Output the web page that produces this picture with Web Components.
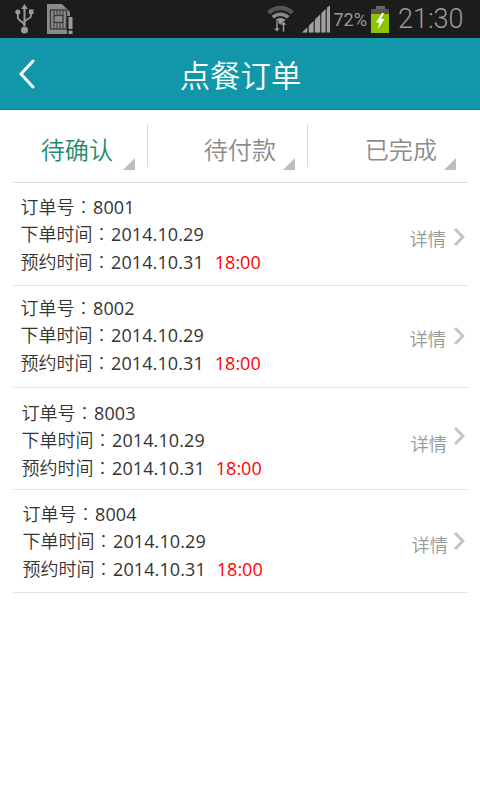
<!DOCTYPE html>
<html><head><meta charset="utf-8">
<style>
html,body{margin:0;padding:0;background:#fff;}
body{width:480px;height:800px;overflow:hidden;font-family:"Open Sans","Noto Sans CJK SC",sans-serif;}
</style></head><body>
<status-bar></status-bar>
<app-header>点餐订单</app-header>
<order-tabs>
  <order-tab active style="--w:135px;--pad:35px;--tr:13px">待确认</order-tab>
  <order-tab style="--w:160px;--pad:32px;--tr:13px">待付款</order-tab>
  <order-tab last style="--w:160px;--pad:31px;--tr:12px">已完成</order-tab>
</order-tabs>
<order-row num="8001" d1="2014.10.29" d2="2014.10.31" t="18:00" style="--x:7.500px;--h:103px;--top:10px;--my:7px;--c:2px;--g:7px"></order-row>
<order-row num="8002" d1="2014.10.29" d2="2014.10.31" t="18:00" style="--x:7.500px;--h:102px;--top:8px;--my:3px;--c:1px;--g:7px"></order-row>
<order-row num="8003" d1="2014.10.29" d2="2014.10.31" t="18:00" style="--x:8.500px;--h:102px;--top:11px;--my:9px;--c:-4px;--g:6px"></order-row>
<order-row num="8004" d1="2014.10.29" d2="2014.10.31" t="18:00" style="--x:9.500px;--h:103px;--top:10px;--my:5px;--c:0px;--g:5px"></order-row>
<script>
function def(name,html){
  customElements.define(name,class extends HTMLElement{
    constructor(){super();this.attachShadow({mode:"open"});}
    connectedCallback(){this.shadowRoot.innerHTML=typeof html==="function"?html(this):html;}
  });
}
def("status-bar",`<style>
:host{display:flex;align-items:center;height:38px;background:#1c1c1c;color:#9a9a9a;font-family:"Roboto",sans-serif;padding:0 16.500px 0 15px;box-sizing:border-box}
svg{display:block;flex:none}
.l{display:flex;align-items:center;gap:13px}
.r{margin-left:auto;display:flex;align-items:center}
.pct{font-size:18px;margin:0 4px 0 0}
.clock{font-size:27px;font-weight:300;margin-left:9px}
</style>
<div class="l">
<svg width="19" height="30" viewBox="0 0 19 30"><path d="M9.500 0l3.300 5h-2.300v17h-2V5H6.200z" fill="#9a9a9a"/><circle cx="9.500" cy="26" r="3.500" fill="#9a9a9a"/><path d="M2.800 9v4.500c0 3 6.700 4.500 6.700 8M16 9v3c0 3-6.500 3-6.500 6.500" fill="none" stroke="#9a9a9a" stroke-width="1.800"/><circle cx="2.800" cy="8" r="2.500" fill="#9a9a9a"/><rect x="14" y="5.500" width="4.500" height="4.500" fill="#9a9a9a"/></svg>
<svg width="26" height="30" viewBox="0 0 26 30"><path d="M0 0h15l8 8v22H0z" fill="#8a8a8a"/><rect x="3.500" y="6" width="16" height="19" fill="none" stroke="#3a3a3a" stroke-width="1.300"/><rect x="7" y="11.500" width="9" height="7" fill="none" stroke="#3a3a3a" stroke-width="1.300"/><path d="M7 6v5M10 6v5M13 6v5M16 6v5M7 19v6M10 19v6M13 19v6M16 19v6" stroke="#3a3a3a"/><rect x="20" y="12" width="6" height="18" fill="#1c1c1c"/><rect x="21.500" y="13" width="4" height="12" fill="#9a9a9a"/><rect x="21.500" y="26.500" width="4" height="3.500" fill="#9a9a9a"/></svg>
</div>
<div class="r">
<svg width="27" height="28" viewBox="0 0 27 28" style="margin-right:8px"><path d="M0 6.500a19 19 0 0 1 27 0l-3 3a15 15 0 0 0-21 0z" fill="#555"/><path d="M4.500 11a13 13 0 0 1 18 0l-2.500 2.500a9.500 9.500 0 0 0-13 0z" fill="#8a8a8a"/><path d="M8.500 15a7.500 7.500 0 0 1 10 0l-5 5z" fill="#9a9a9a"/><path d="M9 16h2v7h2.200l-3.200 4-3.200-4H9zM15.500 27v-7h-2.200l3.200-4 3.200 4H17.500v7z" fill="#9a9a9a" stroke="#1c1c1c" stroke-width=".6"/></svg>
<svg width="28" height="28" viewBox="0 0 28 28" style="margin-right:4px"><path d="M0 27.500L28 .5v27z" fill="#3d3d3d"/><path d="M0 27.500l5-5v5zM7 27.500v-7l4.500-4.500v11.500zM13 27.500V14.500l5-5v18zM19.500 27.500V8l4-4v23.500zM25 27.500V2.500l3-2v27z" fill="#a0a0a0"/></svg>
<span class="pct">72%</span>
<svg width="18" height="27" viewBox="0 0 18 27"><rect x="5" y="0" width="9" height="3" fill="#666"/><rect x="0" y="3" width="18" height="6" fill="#555"/><rect x="0" y="8" width="18" height="19" fill="#8fc400"/><path d="M11 7l-6 9.500h3.500l-2 7 7-10.500H10l3-6z" fill="#fff"/></svg>
<span class="clock">21:30</span>
</div>`);
def("app-header",`<style>
:host{display:flex;align-items:center;justify-content:center;position:relative;height:71px;background:#1197a9;border-bottom:1px solid #0c7f88;color:#fff;font-family:"Noto Sans CJK SC",sans-serif;font-weight:350;font-size:30.400px;padding-left:1px}
svg{position:absolute;left:19px;top:21px}
</style>
<svg width="16" height="30" viewBox="0 0 16 30"><path d="M14 2L2 15l12 13" fill="none" stroke="#fff" stroke-width="3" stroke-linecap="round" stroke-linejoin="miter"/></svg>
<slot></slot>`);
def("order-tabs",`<style>
:host{display:flex;height:72px;margin:0 12px 0 13px;border-bottom:1px solid #dcdcdc;box-sizing:content-box}
</style><slot></slot>`);
def("order-tab",t=>`<style>
:host{display:flex;flex:none;width:var(--w);height:72px;position:relative;box-sizing:border-box;font-family:"Noto Sans CJK SC",sans-serif;font-weight:350;font-size:24.100px;color:${t.hasAttribute("active")?"#1f8a6e":"#8c8c8c"};justify-content:flex-end;align-items:center}
span{margin-right:var(--pad);margin-top:4px}
.sep{position:absolute;right:0;top:15px;height:42px;width:1px;background:#d8d8d8;${t.hasAttribute("last")?"display:none":""}}
.tri{position:absolute;right:var(--tr);bottom:12px;width:0;height:0;border-left:12px solid transparent;border-bottom:12px solid #bdbdbd}
</style><span><slot></slot></span><i class="tri"></i><i class="sep"></i>`);
def("order-row",t=>{const g=a=>t.getAttribute(a);const c='<span class="c">：</span>';return `<style>
:host{display:flex;height:var(--h);box-sizing:border-box;margin:0 12px 0 13px;border-bottom:1px solid #e2e2e2;padding-left:var(--x);padding-right:3px;font-size:18px;color:#333;align-items:flex-start}
.t{padding-top:var(--top);font-family:"Noto Sans CJK SC",sans-serif;font-weight:350}
.t>div{height:27.300px;line-height:27px;white-space:nowrap}
.c{font-family:"Noto Sans CJK TC",sans-serif;font-weight:300;margin-right:.5px}
.n{font-family:"Open Sans",sans-serif;font-weight:400;letter-spacing:.1px}
.red{color:#f00;margin-left:11px;font-family:"Open Sans",sans-serif;font-weight:400}
.d{margin-left:auto;display:flex;align-items:flex-start;align-self:center;color:#999;line-height:26px;font-family:"Noto Sans CJK SC",sans-serif;font-weight:350;font-size:18.300px;gap:var(--g);margin-top:var(--my)}
svg{display:block;margin-top:var(--c)}
</style>
<div class="t"><div>订单号${c}<span class="n">${g("num")}</span></div><div>下单时间${c}<span class="n">${g("d1")}</span></div><div>预约时间${c}<span class="n">${g("d2")}</span><span class="red">${g("t")}</span></div></div>
<div class="d">详情<svg width="12" height="20" viewBox="0 0 12 20"><path d="M2 2l8 8-8 8" fill="none" stroke="#c4c4c4" stroke-width="3"/></svg></div>`});
</script>
</body></html>
